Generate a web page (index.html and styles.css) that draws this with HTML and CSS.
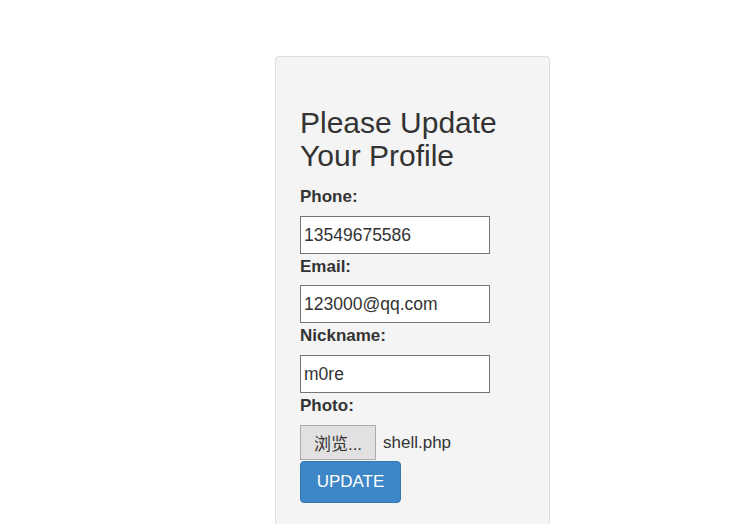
FILE: index.html
```html
<!DOCTYPE html>
<html>
<head>
<meta charset="utf-8">
<link rel="stylesheet" href="styles.css">
</head>
<body>
<div class="panel">
  <h2 class="title">Please Update Your Profile</h2>
  <form class="form">
    <label class="lbl">Phone:</label>
    <input class="field" type="text" value="13549675586">
    <label class="lbl">Email:</label>
    <input class="field" type="text" value="123000@qq.com">
    <label class="lbl">Nickname:</label>
    <input class="field" type="text" value="m0re">
    <label class="lbl">Photo:</label>
    <div class="file-row">
      <span class="file-btn">浏览...</span>
      <span class="file-name">shell.php</span>
    </div>
    <button class="submit" type="button">UPDATE</button>
  </form>
</div>
</body>
</html>
```
FILE: styles.css
```css
html, body {
  margin: 0;
  padding: 0;
  background: #ffffff;
  font-family: "Liberation Sans", Arial, "Noto Sans CJK SC", sans-serif;
  color: #333333;
  overflow: hidden;
}
.panel {
  margin: 56px 0 0 275px;
  width: 249px;
  height: 467px;
  padding: 0 0 0 24px;
  background: #f4f4f4;
  border: 1px solid #dedede;
  border-bottom: none;
  border-radius: 4px 4px 0 0;
  box-sizing: content-box;
}
.title {
  margin: 0;
  padding-top: 49px;
  font-size: 30px;
  font-weight: 400;
  line-height: 33px;
  color: #333333;
  margin-bottom: 12px;
}
.form {
  display: flex;
  flex-direction: column;
  align-items: flex-start;
}
.lbl {
  display: block;
  padding-top: 1px;
  font-size: 17px;
  font-weight: 700;
  line-height: 23.5px;
  margin-bottom: 7px;
  color: #333333;
}
.field {
  box-sizing: border-box;
  width: 190px;
  height: 38px;
  margin: 0;
  padding: 1px 3px 0;
  border: 1px solid #767676;
  border-radius: 0;
  background: #ffffff;
  font-family: "Liberation Sans", Arial, sans-serif;
  font-size: 17.5px;
  color: #333333;
  outline: none;
}
.file-row {
  display: flex;
  align-items: center;
  margin-top: 1px;
}
.file-btn {
  box-sizing: border-box;
  display: flex;
  align-items: center;
  justify-content: center;
  width: 76px;
  height: 35px;
  background: #e1e1e1;
  border: 1px solid #adadad;
  font-size: 17px;
  font-family: "Liberation Sans", "Noto Sans CJK SC", sans-serif;
  color: #333333;
}
.file-name {
  margin-left: 7px;
  font-size: 17px;
  color: #333333;
}
.submit {
  box-sizing: border-box;
  width: 101px;
  height: 42px;
  margin: 1px 0 0 0;
  padding: 0;
  background: #3d87c8;
  border: 1px solid #3578b5;
  border-radius: 4px;
  color: #ffffff;
  font-family: "Liberation Sans", Arial, sans-serif;
  font-size: 17px;
}
```
